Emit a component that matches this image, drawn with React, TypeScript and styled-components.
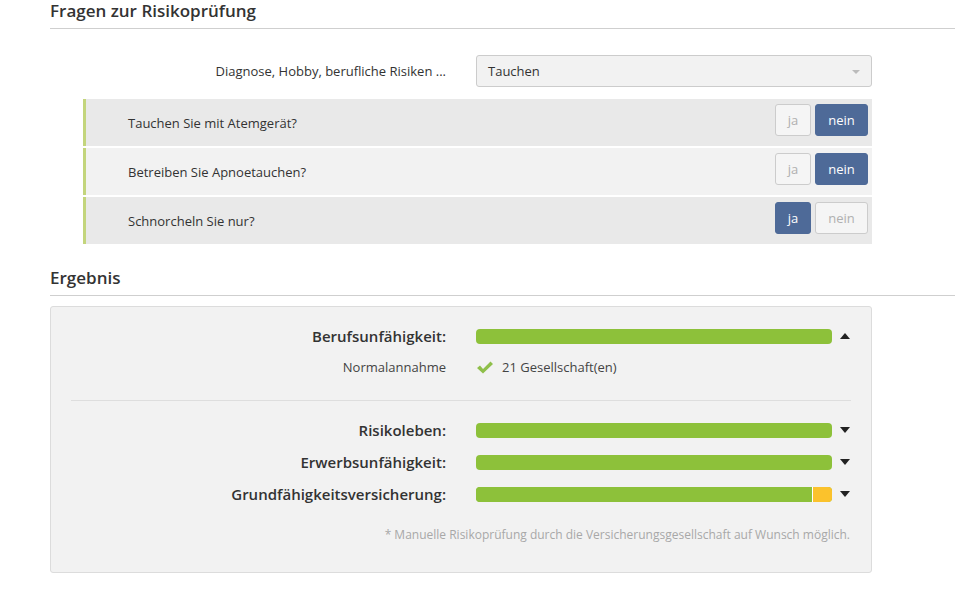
import React from 'react';
import styled, {createGlobalStyle} from 'styled-components';

const GlobalStyle = createGlobalStyle`
    body {
        margin: 0;
        background: #fff;
        font-family: "Open Sans", "Liberation Sans", sans-serif;
        color: #333;
    }
`;

const Page = styled.div`
    padding-left: 50px;
    padding-bottom: 24px;
`;

const SectionTitle = styled.h2<{ $top: number }>`
    margin: ${({$top}) => $top}px 0 0 0;
    padding-bottom: 5px;
    font-size: 17px;
    line-height: 24px;
    font-weight: 600;
    color: #333;
    border-bottom: 1px solid #cfcfcf;
`;

const Form = styled.div`
    width: 822px;
`;

const SelectRow = styled.div`
    display: grid;
    grid-template-columns: 396px 396px;
    column-gap: 30px;
    align-items: center;
    margin-top: 26px;
`;

const FieldLabel = styled.label`
    text-align: right;
    font-size: 13px;
    color: #333;
`;

const Select = styled.div`
    position: relative;
    height: 32px;
    box-sizing: border-box;
    border: 1px solid #ccc;
    border-radius: 3px;
    background: #f2f2f2;
    display: flex;
    align-items: center;
    padding-left: 11px;
    font-size: 13px;
    color: #333;
`;

const Caret = styled.span`
    position: absolute;
    right: 11px;
    top: 14px;
    border-left: 4px solid transparent;
    border-right: 4px solid transparent;
    border-top: 4px solid #bbb;
`;

const Questions = styled.div`
    margin: 12px 0 0 33px;
    display: flex;
    flex-direction: column;
    gap: 2px;
`;

const QuestionRow = styled.div<{ $shade: boolean }>`
    height: 47px;
    box-sizing: border-box;
    display: flex;
    align-items: center;
    justify-content: space-between;
    border-left: 3px solid #c3d57c;
    background: ${({$shade}) => $shade ? '#e9e9e9' : '#f2f2f2'};
    padding: 0 4px 0 42px;
    font-size: 13px;
    color: #333;
`;

const Toggle = styled.div`
    display: flex;
    gap: 4px;
    margin-bottom: 5px;
`;

const ToggleButton = styled.button<{ $active: boolean; $w: number }>`
    width: ${({$w}) => $w}px;
    height: 32px;
    box-sizing: border-box;
    border-radius: 3px;
    font-family: inherit;
    font-size: 13px;
    padding: 0;
    cursor: pointer;
    border: 1px solid ${({$active}) => $active ? '#4e6a98' : '#ccc'};
    background: ${({$active}) => $active ? '#4e6a98' : '#f5f5f5'};
    color: ${({$active}) => $active ? '#fff' : '#b0b0b0'};
`;

const Panel = styled.div`
    width: 822px;
    box-sizing: border-box;
    margin-top: 10px;
    border: 1px solid #dcdcdc;
    border-radius: 3px;
    background: #f2f2f2;
    padding: 13px 20px 29px 19px;
`;

const ResultRow = styled.div`
    display: grid;
    grid-template-columns: 406px 356px 1fr;
    align-items: center;
    height: 32px;
`;

const ResultLabel = styled.div`
    text-align: right;
    padding-right: 30px;
    font-size: 15px;
    font-weight: 600;
    color: #333;
`;

const Bar = styled.div`
    display: flex;
    height: 15px;
    border-radius: 4px;
    overflow: hidden;
    background: #8dc13a;
`;

const BarPart = styled.div<{ $color: string }>`
    height: 100%;
    background: ${({$color}) => $color};
`;

const ArrowCell = styled.div`
    display: flex;
    justify-content: flex-start;
    padding-left: 8px;
`;

const Arrow = styled.span<{ $up: boolean }>`
    border-left: 5px solid transparent;
    border-right: 5px solid transparent;
    ${({$up}) => $up ? 'border-bottom: 6px solid #222;' : 'border-top: 6px solid #222;'}
`;

const DetailRow = styled.div`
    display: grid;
    grid-template-columns: 406px 356px;
    align-items: center;
    height: 30px;
    font-size: 13px;
    color: #444;
`;

const DetailLabel = styled.div`
    text-align: right;
    padding-right: 30px;
`;

const DetailValue = styled.div`
    display: flex;
    align-items: center;
    gap: 8px;
`;

const Divider = styled.hr`
    margin: 18px 0 13px 1px;
    border: none;
    border-top: 1px solid #dedede;
`;

const Footnote = styled.div`
    margin-top: 17px;
    padding-right: 1px;
    text-align: right;
    font-size: 12px;
    line-height: 16px;
    color: #a8a8a8;
`;

const Check = () => (
    <svg width="18" height="15" viewBox="0 0 18 15">
        <path d="M1 8 L4 5.5 L7 9 L14.5 1.5 L17 4 L7 13.5 Z" fill="#8fbf4a"/>
    </svg>
);

const questions = [
    {text: 'Tauchen Sie mit Atemgerät?', answer: false},
    {text: 'Betreiben Sie Apnoetauchen?', answer: false},
    {text: 'Schnorcheln Sie nur?', answer: true},
];

type Part = { color: string; pct: number };

const results: { label: string; parts: Part[] }[] = [
    {label: 'Risikoleben:', parts: [{color: '#8dc13a', pct: 100}]},
    {label: 'Erwerbsunfähigkeit:', parts: [{color: '#8dc13a', pct: 100}]},
    {
        label: 'Grundfähigkeitsversicherung:',
        parts: [{color: '#8dc13a', pct: 94.4}, {color: '#fff', pct: 0.3}, {color: '#fbc22c', pct: 5.3}],
    },
];

const ResultBar = ({parts}: { parts: Part[] }) => (
    <Bar>
        {parts.map((p, i) => <BarPart key={i} $color={p.color} style={{width: `${p.pct}%`}}/>)}
    </Bar>
);

export default function App() {
    return (
        <Page>
            <GlobalStyle/>
            <SectionTitle $top={-1}>Fragen zur Risikoprüfung</SectionTitle>
            <Form>
                <SelectRow>
                    <FieldLabel>Diagnose, Hobby, berufliche Risiken ...</FieldLabel>
                    <Select>
                        Tauchen
                        <Caret/>
                    </Select>
                </SelectRow>
                <Questions>
                    {questions.map((q, i) => (
                        <QuestionRow key={i} $shade={i % 2 === 0}>
                            <span>{q.text}</span>
                            <Toggle>
                                <ToggleButton $w={36} $active={q.answer}>ja</ToggleButton>
                                <ToggleButton $w={53} $active={!q.answer}>nein</ToggleButton>
                            </Toggle>
                        </QuestionRow>
                    ))}
                </Questions>
            </Form>
            <SectionTitle $top={22}>Ergebnis</SectionTitle>
            <Panel>
                <ResultRow>
                    <ResultLabel>Berufsunfähigkeit:</ResultLabel>
                    <ResultBar parts={[{color: '#8dc13a', pct: 100}]}/>
                    <ArrowCell><Arrow $up/></ArrowCell>
                </ResultRow>
                <DetailRow>
                    <DetailLabel>Normalannahme</DetailLabel>
                    <DetailValue><Check/>21 Gesellschaft(en)</DetailValue>
                </DetailRow>
                <Divider/>
                {results.map((r, i) => (
                    <ResultRow key={i}>
                        <ResultLabel>{r.label}</ResultLabel>
                        <ResultBar parts={r.parts}/>
                        <ArrowCell><Arrow $up={false}/></ArrowCell>
                    </ResultRow>
                ))}
                <Footnote>* Manuelle Risikoprüfung durch die Versicherungsgesellschaft auf Wunsch möglich.</Footnote>
            </Panel>
        </Page>
    );
}
